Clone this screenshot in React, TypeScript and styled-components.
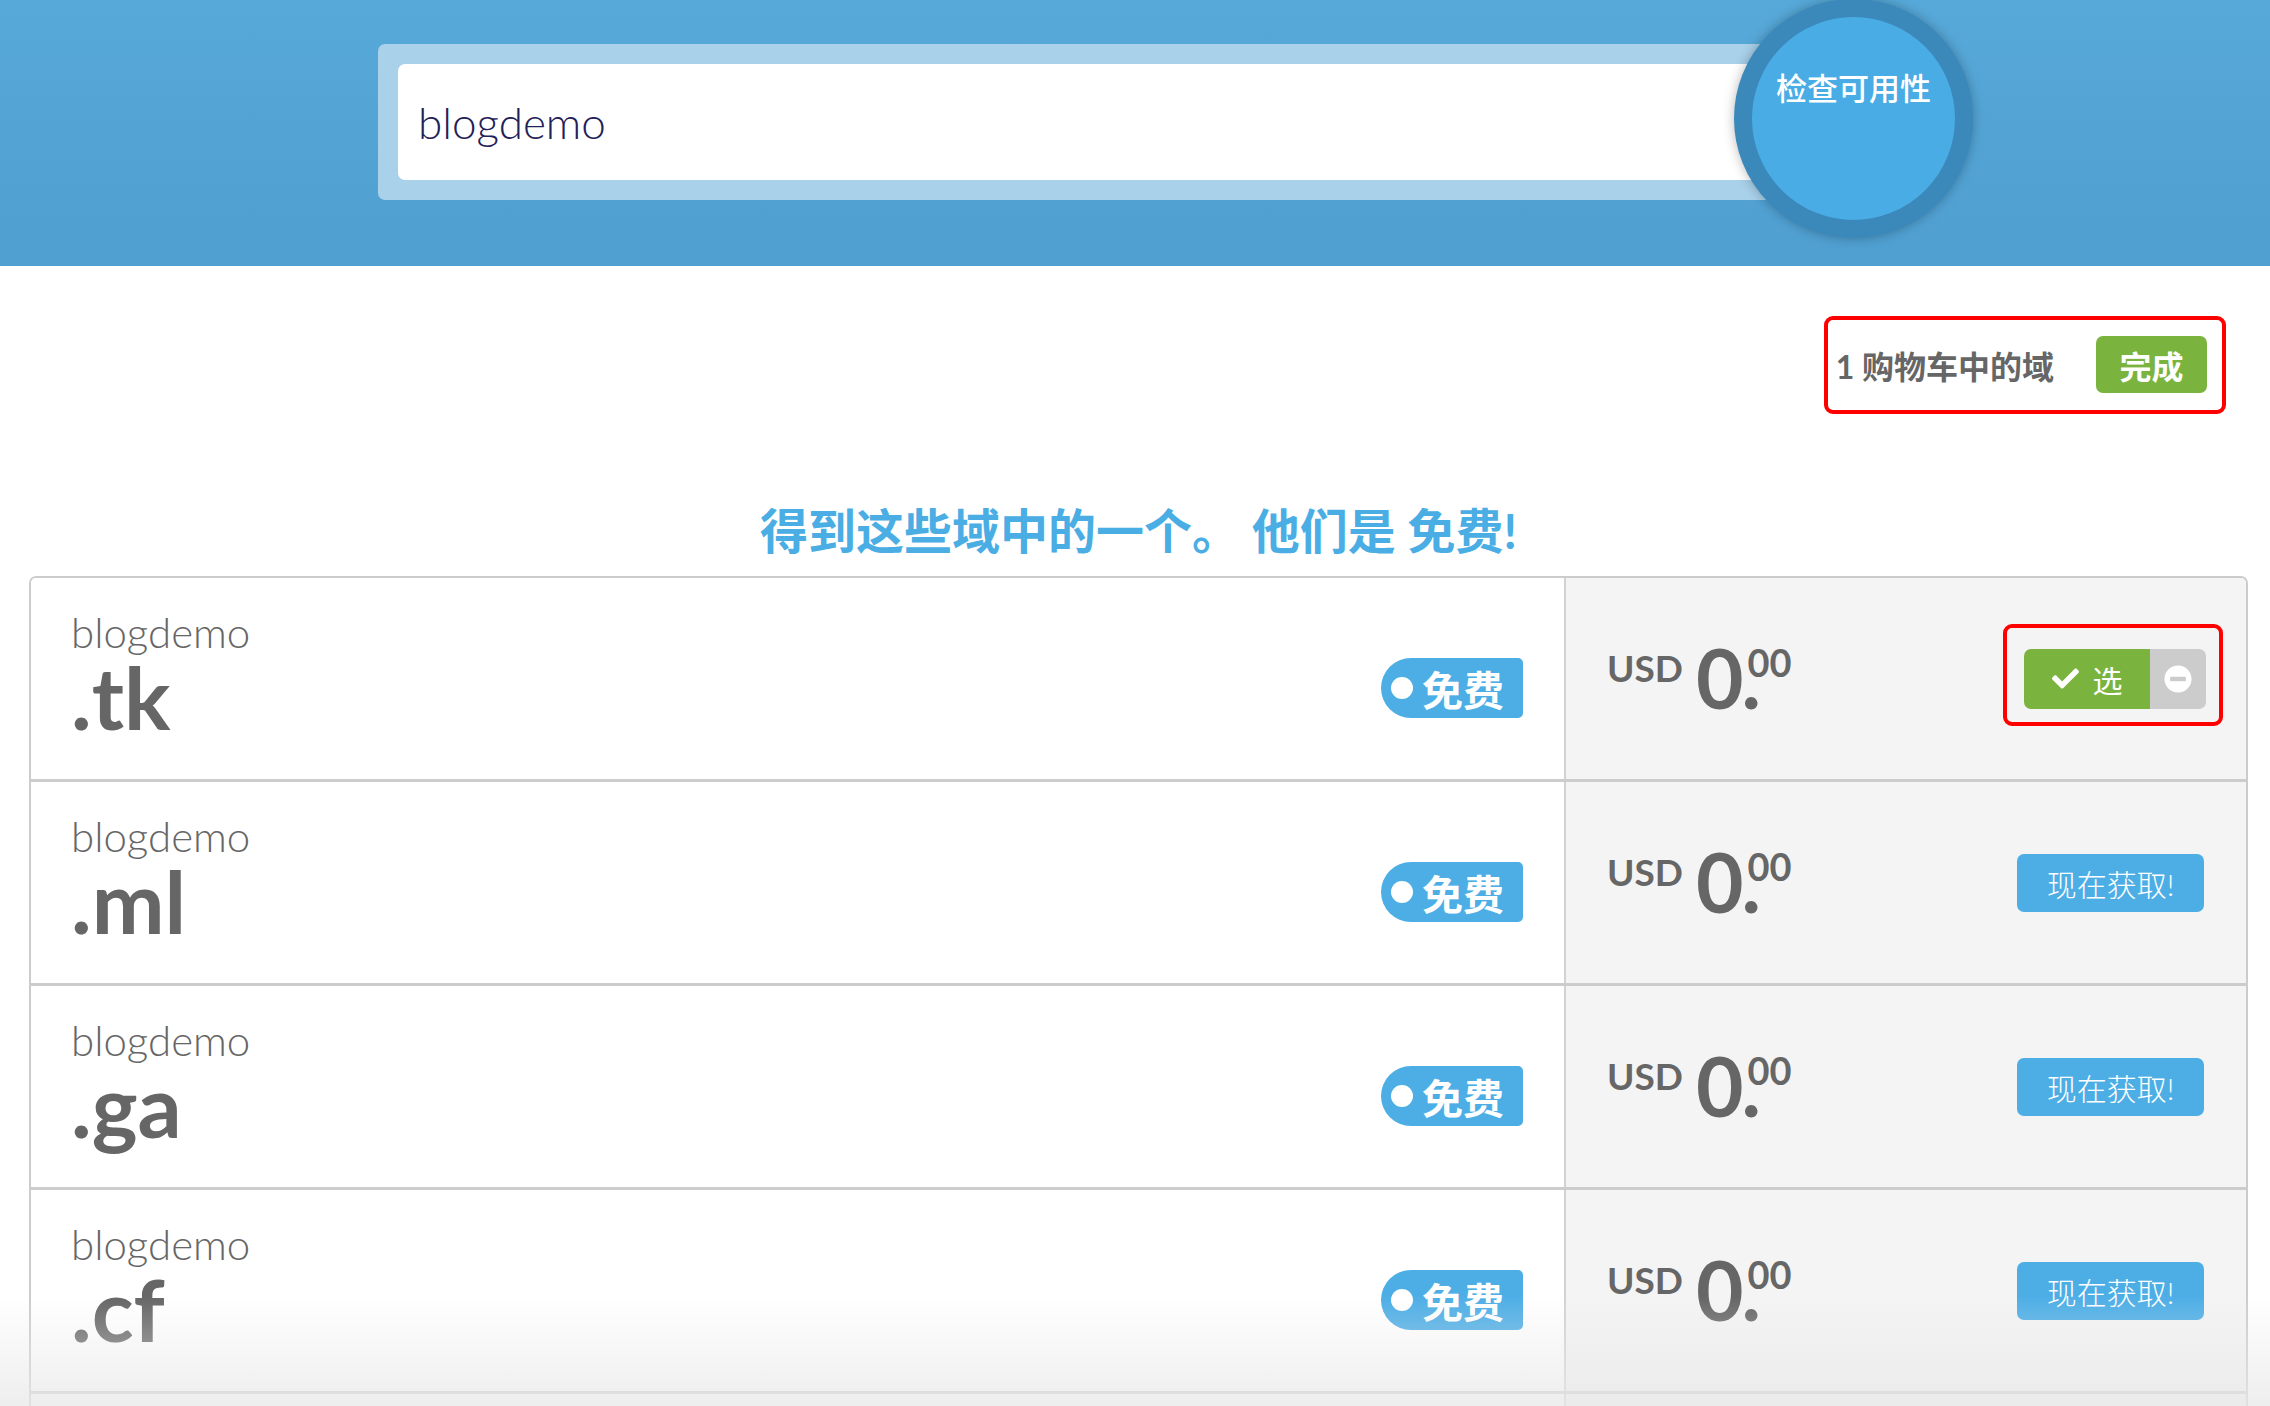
import React from "react";
import styled, { createGlobalStyle } from "styled-components";
import { FaCheck, FaMinusCircle } from "react-icons/fa";

const GlobalStyle = createGlobalStyle`
  html, body { margin: 0; padding: 0; background: #fff; }
  body { font-family: "Lato", "Noto Sans CJK SC", sans-serif; color: #666; }
  * { box-sizing: border-box; }
`;

const CJK = `"Lato", "Noto Sans CJK SC", sans-serif`;

const Page = styled.div`
  position: relative;
  height: 100vh;
  overflow: hidden;
`;

const Header = styled.header`
  height: 266px;
  background: linear-gradient(180deg, #57a9d9 0%, #4f9fd1 100%);
  display: flex;
  align-items: flex-start;
  padding-left: 378px;
`;

const SearchFrame = styled.div`
  margin-top: 44px;
  width: 1422px;
  height: 156px;
  background: #a9d1ea;
  border-radius: 7px;
  padding: 20px 0 20px 20px;
`;

const SearchInput = styled.div`
  height: 116px;
  background: #fff;
  border-radius: 7px 0 0 7px;
  display: flex;
  align-items: center;
  padding-left: 20px;
  font-family: ${CJK};
  font-weight: 300;
  font-size: 44px;
  color: #1f2159;
`;

const CheckButton = styled.div`
  position: relative;
  z-index: 2;
  margin-top: -1px;
  margin-left: -66px;
  width: 239px;
  height: 239px;
  border-radius: 50%;
  background: #49ace4;
  border: 18px solid #3b88ba;
  box-shadow: 0 0 12px rgba(0, 0, 0, 0.28);
  display: flex;
  justify-content: center;
  align-items: flex-start;
  padding-top: 56px;
  font-family: ${CJK};
  font-size: 31px;
  font-weight: 500;
  line-height: 1;
  color: #fff;
`;

const Main = styled.main`
  padding: 0 22px 0 29px;
`;

const CartRow = styled.div`
  display: flex;
  justify-content: flex-end;
  margin: 50px 22px 0 0;
`;

const CartBox = styled.div`
  display: flex;
  align-items: center;
  gap: 42px;
  border: 4px solid #ff0000;
  border-radius: 9px;
  padding: 16px 15px 17px 8px;
`;

const CartText = styled.span`
  font-family: ${CJK};
  font-weight: 700;
  font-size: 32px;
  color: #666;
`;

const DoneButton = styled.span`
  width: 111px;
  height: 57px;
  border-radius: 7px;
  background: #7ab33e;
  color: #fff;
  font-family: ${CJK};
  font-weight: 700;
  font-size: 32px;
  display: flex;
  align-items: center;
  justify-content: center;
`;

const Title = styled.h2`
  margin: 88px 0 16px;
  text-align: center;
  font-family: ${CJK};
  font-weight: 700;
  font-size: 48px;
  line-height: 58px;
  color: #4aaee4;
`;

const Table = styled.div`
  border: 2px solid #cccccc;
  border-bottom: none;
  border-radius: 7px 7px 0 0;
  overflow: hidden;
`;

const Row = styled.div`
  display: grid;
  grid-template-columns: 1535px 1fr;
  height: 204px;
  border-bottom: 3px solid #cccccc;
`;

const NameCell = styled.div`
  display: flex;
  align-items: center;
  justify-content: space-between;
  padding: 0 41px 0 40px;
  background: #fff;
  border-right: 2px solid #d2d2d2;
`;

const NameBlock = styled.div`
  display: flex;
  flex-direction: column;
  margin-top: -6px;
`;

const Sld = styled.span`
  font-family: "Lato", sans-serif;
  font-weight: 300;
  font-size: 42px;
  line-height: 1;
  color: #666;
`;

const Tld = styled.span`
  font-family: "Lato", sans-serif;
  font-weight: 700;
  font-size: 87px;
  line-height: 1;
  color: #666;
`;

const FreeBadge = styled.span`
  margin-top: 18px;
  width: 142px;
  height: 60px;
  border-radius: 30px 5px 5px 30px;
  background: #4daee6;
  display: flex;
  align-items: center;
  padding-left: 10px;
  gap: 9px;
  font-family: ${CJK};
  font-weight: 700;
  font-size: 41px;
  color: #fff;
`;

const BadgeDot = styled.span`
  width: 22px;
  height: 22px;
  border-radius: 50%;
  background: #fff;
`;

const PriceCell = styled.div`
  display: flex;
  align-items: center;
  justify-content: space-between;
  padding: 0 42px 0 41px;
  background: #f4f4f4;
`;

const Price = styled.div`
  display: flex;
  align-items: flex-start;
  color: #666;
  font-family: "Lato", sans-serif;
  font-weight: 700;
  line-height: 1;
  margin-top: -4px;
`;

const Currency = styled.span`
  font-size: 37px;
  margin-top: 13px;
  margin-right: 13px;
`;

const Integer = styled.span`
  font-size: 82px;
`;

const Decimals = styled.span`
  display: inline-grid;
  margin-left: 4px;
`;

const Cents = styled.span`
  grid-area: 1 / 1;
  font-size: 38px;
  margin-top: 7px;
  align-self: start;
`;

const Dot = styled.span`
  grid-area: 1 / 1;
  font-size: 82px;
  margin-left: -6px;
  align-self: end;
`;

const Highlight = styled.div`
  border: 4px solid #ff0000;
  border-radius: 9px;
  padding: 21px 13px 13px 17px;
  margin-right: -19px;
  margin-top: -8px;
`;

const SelectGroup = styled.div`
  display: flex;
  height: 60px;
  border-radius: 7px;
  overflow: hidden;
`;

const SelectedPart = styled.span`
  width: 126px;
  background: #7ab33e;
  color: #fff;
  display: flex;
  align-items: center;
  justify-content: center;
  gap: 14px;
  font-family: ${CJK};
  font-size: 30px;
  svg { width: 27px; height: 27px; }
`;

const RemovePart = styled.span`
  width: 56px;
  background: #cccccc;
  display: flex;
  align-items: center;
  justify-content: center;
  color: #fff;
  svg { width: 28px; height: 28px; }
`;

const GetButton = styled.span`
  width: 187px;
  height: 58px;
  border-radius: 7px;
  background: #4daee6;
  color: #fff;
  display: flex;
  align-items: center;
  justify-content: center;
  font-family: ${CJK};
  font-size: 30px;
  font-weight: 300;
`;

const Fade = styled.div`
  position: absolute;
  left: 0;
  right: 0;
  bottom: 0;
  height: 110px;
  background: linear-gradient(180deg, rgba(235, 235, 235, 0) 0%, rgba(232, 232, 232, 0.75) 100%);
  pointer-events: none;
`;

const domains = [
  { tld: ".tk", selected: true },
  { tld: ".ml", selected: false },
  { tld: ".ga", selected: false },
  { tld: ".cf", selected: false },
  { tld: ".gq", selected: false },
];

export default function App() {
  return (
    <Page>
      <GlobalStyle />
      <Header>
        <SearchFrame>
          <SearchInput>blogdemo</SearchInput>
        </SearchFrame>
        <CheckButton>检查可用性</CheckButton>
      </Header>
      <Main>
        <CartRow>
          <CartBox>
            <CartText>1 购物车中的域</CartText>
            <DoneButton>完成</DoneButton>
          </CartBox>
        </CartRow>
        <Title>得到这些域中的一个。 他们是 免费!</Title>
        <Table>
          {domains.map((d) => (
            <Row key={d.tld}>
              <NameCell>
                <NameBlock>
                  <Sld>blogdemo</Sld>
                  <Tld>{d.tld}</Tld>
                </NameBlock>
                <FreeBadge>
                  <BadgeDot />
                  免费
                </FreeBadge>
              </NameCell>
              <PriceCell>
                <Price>
                  <Currency>USD</Currency>
                  <Integer>0</Integer>
                  <Decimals>
                    <Cents>00</Cents>
                    <Dot>.</Dot>
                  </Decimals>
                </Price>
                {d.selected ? (
                  <Highlight>
                    <SelectGroup>
                      <SelectedPart>
                        <FaCheck />
                        选
                      </SelectedPart>
                      <RemovePart>
                        <FaMinusCircle />
                      </RemovePart>
                    </SelectGroup>
                  </Highlight>
                ) : (
                  <GetButton>现在获取!</GetButton>
                )}
              </PriceCell>
            </Row>
          ))}
        </Table>
      </Main>
      <Fade />
    </Page>
  );
}
